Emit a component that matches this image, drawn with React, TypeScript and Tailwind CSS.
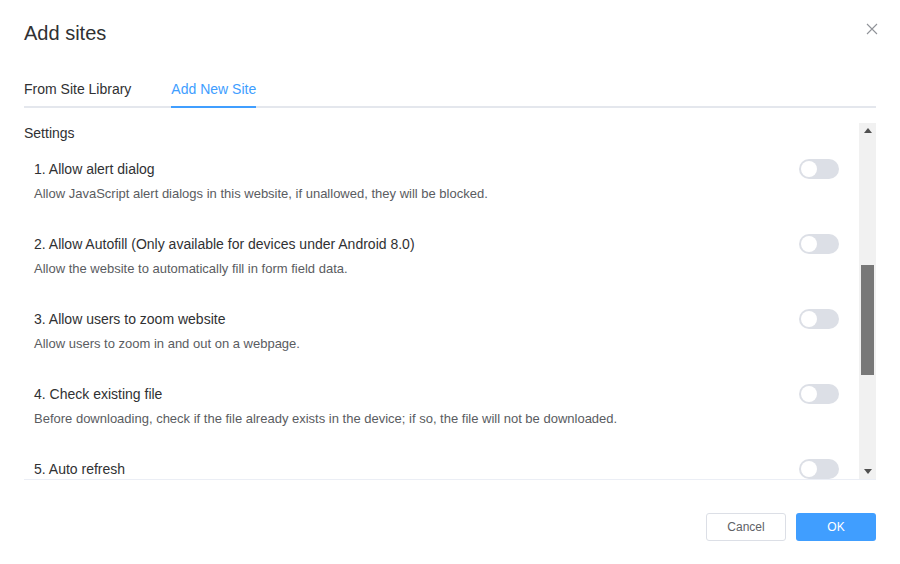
import React, { useState } from 'react';

type SettingItem = {
  id: string;
  title: string;
  desc: string;
};

const settings: SettingItem[] = [
  { id: 'alert', title: '1. Allow alert dialog', desc: 'Allow JavaScript alert dialogs in this website, if unallowed, they will be blocked.' },
  { id: 'autofill', title: '2. Allow Autofill (Only available for devices under Android 8.0)', desc: 'Allow the website to automatically fill in form field data.' },
  { id: 'zoom', title: '3. Allow users to zoom website', desc: 'Allow users to zoom in and out on a webpage.' },
  { id: 'file', title: '4. Check existing file', desc: 'Before downloading, check if the file already exists in the device; if so, the file will not be downloaded.' },
  { id: 'refresh', title: '5. Auto refresh', desc: 'Refresh the webpage automatically at a set interval.' },
];

const Toggle: React.FC<{ on: boolean; onClick: () => void }> = ({ on, onClick }) => (
  <button
    onClick={onClick}
    className={`relative w-10 h-5 rounded-full shrink-0 transition-colors ${on ? 'bg-[#409eff]' : 'bg-[#dcdfe6]'}`}
  >
    <span
      className={`absolute top-[2px] w-4 h-4 rounded-full bg-white transition-all ${on ? 'left-[22px]' : 'left-[2px]'}`}
    />
  </button>
);

export default function App() {
  const [tab, setTab] = useState<'library' | 'new'>('new');
  const [enabled, setEnabled] = useState<Record<string, boolean>>({});

  const toggle = (id: string) => setEnabled(prev => ({ ...prev, [id]: !prev[id] }));

  return (
    <div className="w-[900px] h-[564px] bg-white px-6 text-[#303133] font-['Liberation_Sans',Arial,sans-serif] flex flex-col">
      {/* Header */}
      <div className="flex items-center justify-between h-[64px] pt-[2px]">
        <h2 className="text-[20px] leading-6">Add sites</h2>
        <button className="text-[#909399] -mr-[2px] -mt-[8px]">
          <svg width="12" height="12" viewBox="0 0 12 12" fill="none" stroke="currentColor" strokeWidth="1.1">
            <path d="M1 1 L11 11 M11 1 L1 11" />
          </svg>
        </button>
      </div>

      {/* Tabs */}
      <div className="flex gap-10 border-b-2 border-[#e4e7ed] h-[44px] items-end">
        <button
          onClick={() => setTab('library')}
          className={`text-[14px] h-[42px] pt-[7px] -mb-[2px] border-b-2 ${tab === 'library' ? 'text-[#409eff] border-[#409eff]' : 'text-[#303133] border-transparent'}`}
        >
          From Site Library
        </button>
        <button
          onClick={() => setTab('new')}
          className={`text-[14px] h-[42px] pt-[7px] -mb-[2px] border-b-2 ${tab === 'new' ? 'text-[#409eff] border-[#409eff]' : 'text-[#303133] border-transparent'}`}
        >
          Add New Site
        </button>
      </div>

      {/* Scroll area */}
      <div className="mt-[15px] h-[357px] flex border-b border-[#ebeef5]">
        <div className="flex-1 overflow-hidden">
          <div className="text-[14px] leading-5 text-[#303133]">Settings</div>
          <div className="flex flex-col gap-8 mt-4 pl-[10px] pr-5">
            {settings.map(item => (
              <div key={item.id}>
                <div className="flex items-center justify-between h-5">
                  <span className="text-[14px] text-[#303133]">{item.title}</span>
                  <Toggle on={!!enabled[item.id]} onClick={() => toggle(item.id)} />
                </div>
                <p className="text-[13px] leading-4 mt-[7px] text-[#5a5c61]">{item.desc}</p>
              </div>
            ))}
          </div>
        </div>
        {/* Scrollbar */}
        <div className="w-[17px] bg-[#f1f1f1] flex flex-col items-center justify-between py-[5px]">
          <svg width="8" height="5" viewBox="0 0 8 5"><path d="M4 0 L8 5 L0 5 Z" fill="#505050" /></svg>
          <div className="flex-1 w-full flex flex-col px-[2px] pt-[132px] pb-[94px]">
            <div className="flex-1 bg-[#787878]" />
          </div>
          <svg width="8" height="5" viewBox="0 0 8 5"><path d="M0 0 L8 0 L4 5 Z" fill="#505050" /></svg>
        </div>
      </div>

      {/* Footer */}
      <div className="flex justify-end gap-[10px] mt-[33px]">
        <button className="w-20 h-[28px] border border-[#dcdfe6] rounded-[3px] text-[12px] text-[#606266] bg-white">
          Cancel
        </button>
        <button className="w-20 h-[28px] rounded-[3px] text-[12px] text-white bg-[#409eff]">
          OK
        </button>
      </div>
    </div>
  );
}
